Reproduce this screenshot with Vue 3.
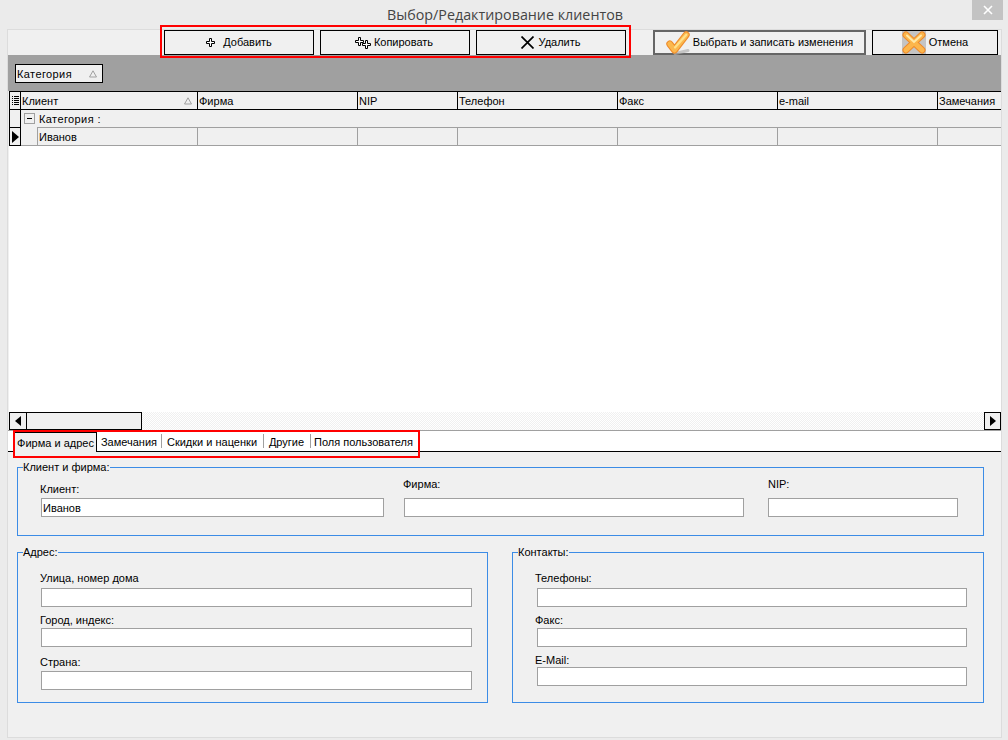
<script setup>
const columns = [
  { name: 'Клиент', width: 177, sorted: true },
  { name: 'Фирма', width: 160 },
  { name: 'NIP', width: 100 },
  { name: 'Телефон', width: 160 },
  { name: 'Факс', width: 160 },
  { name: 'e-mail', width: 160 },
  { name: 'Замечания', width: 63 },
]

const tabs = [
  { name: 'Фирма и адрес', width: 83 },
  { name: 'Замечания', width: 64 },
  { name: 'Скидки и наценки', width: 102 },
  { name: 'Другие', width: 47 },
  { name: 'Поля пользователя', width: 107 },
]

const address = ['Улица, номер дома', 'Город, индекс:', 'Страна:']
const contacts = ['Телефоны:', 'Факс:', 'E-Mail:']
</script>

<template>
  <div class="window">
    <div class="titlebar">
      <span class="title">Выбор/Редактирование клиентов</span>
      <div class="close">
        <svg width="10" height="10" viewBox="0 0 10 10"><path d="M1 1l8 8M9 1l-8 8" stroke="#fff" stroke-width="1.6" /></svg>
      </div>
    </div>

    <div class="panel">
      <div class="toolbar">
        <div class="edit-buttons">
          <button class="btn edit add">
            <svg width="9" height="9" viewBox="0 0 9 9"><path d="M3.500.5h2v3h3v2h-3v3h-2v-3h-3v-2h3z" fill="#fff" stroke="#000" /></svg>
            <span class="label">Добавить</span>
          </button>
          <button class="btn edit copy">
            <svg width="16" height="12" viewBox="0 0 16 12">
              <path d="M3.500.5h2v3h3v2h-3v3h-2v-3h-3v-2h3z" fill="#fff" stroke="#000" />
              <path d="M10.500 3.500h2v3h3v2h-3v3h-2v-3h-3v-2h3z" fill="#fff" stroke="#000" />
            </svg>
            <span class="label">Копировать</span>
          </button>
          <button class="btn edit remove">
            <svg width="13" height="13" viewBox="0 0 13 13"><path d="M.5.5l12 12M12.500.5l-12 12" stroke="#000" stroke-width="1.700" /></svg>
            <span class="label">Удалить</span>
          </button>
        </div>
        <button class="btn save">
          <svg class="check" width="24" height="24" viewBox="0 0 24 24">
            <path d="M9 22.500l13-3" stroke="#b0b0b0" stroke-width="3" stroke-linecap="round" fill="none" opacity="0.7" />
            <path d="M3.800 13l4.700 6L20.200 3.800" stroke="#ee8a2a" stroke-width="7" stroke-linecap="round" stroke-linejoin="round" fill="none" />
            <path d="M3.800 13l4.700 6L20.200 3.800" stroke="#fbb84e" stroke-width="5" stroke-linecap="round" stroke-linejoin="round" fill="none" />
            <path d="M9 16.500L20.300 3.700" stroke="#ffe18a" stroke-width="2.200" stroke-linecap="round" fill="none" />
          </svg>
          <span class="label">Выбрать и записать изменения</span>
        </button>
        <button class="btn cancel">
          <span class="cancel-icon">
            <svg width="24" height="23" viewBox="0 0 24 23">
              <path d="M4 4l16 15M20 4L4 19" stroke="#ee8a2a" stroke-width="7" stroke-linecap="round" fill="none" />
              <path d="M4 4l16 15M20 4L4 19" stroke="#fcb64c" stroke-width="5" stroke-linecap="round" fill="none" />
              <path d="M5 4.500l7 6.500 7-6.500" stroke="#ffe9a8" stroke-width="2" stroke-linecap="round" fill="none" />
            </svg>
          </span>
          <span class="label">Отмена</span>
        </button>
      </div>

      <div class="group-band">
        <div class="group-chip">
          <span class="spaced">Категория</span>
          <svg width="8" height="8" viewBox="0 0 8 8"><path d="M4 .8L7.500 7H.5z" fill="none" stroke="#a0a0a0" /></svg>
        </div>
      </div>

      <div class="grid">
        <div class="grid-head">
          <div class="indicator">
            <svg width="7" height="10" viewBox="0 0 7 10"><path d="M0 .5h1M2 .5h5M0 2.500h1M2 2.500h5M0 4.500h1M2 4.500h5M0 6.500h1M2 6.500h5M0 8.500h1M2 8.500h5" stroke="#000" /></svg>
          </div>
          <div v-for="col in columns" :key="col.name" class="head-cell" :style="{ width: col.width + 'px' }">
            <span>{{ col.name }}</span>
            <svg v-if="col.sorted" width="8" height="8" viewBox="0 0 8 8"><path d="M4 .8L7.500 7H.5z" fill="none" stroke="#a0a0a0" /></svg>
          </div>
        </div>
        <div class="group-row">
          <div class="row-side"></div>
          <div class="expander"><span class="minus"></span></div>
          <span class="group-name spaced">Категория :</span>
        </div>
        <div class="data-row">
          <div class="row-side current">
            <svg width="7" height="12" viewBox="0 0 7 12"><path d="M0 0l7 6-7 6z" fill="#000" /></svg>
          </div>
          <div class="indent"></div>
          <div
            v-for="(col, i) in columns"
            :key="col.name"
            class="data-cell"
            :style="{ width: (i === 0 ? col.width - 17 : col.width) + 'px' }"
          >{{ i === 0 ? 'Иванов' : '' }}</div>
        </div>
        <div class="grid-body"></div>
        <div class="scrollbar">
          <div class="arrow">
            <svg width="6" height="10" viewBox="0 0 6 10"><path d="M6 0L0 5l6 5z" fill="#000" /></svg>
          </div>
          <div class="thumb"></div>
          <div class="track"></div>
          <div class="arrow right">
            <svg width="6" height="10" viewBox="0 0 6 10"><path d="M0 0l6 5-6 5z" fill="#000" /></svg>
          </div>
        </div>
      </div>

      <div class="tabs">
        <div
          v-for="(tab, i) in tabs"
          :key="tab.name"
          class="tab"
          :class="{ active: i === 0 }"
          :style="{ width: tab.width + 'px' }"
        >{{ tab.name }}</div>
      </div>

      <div class="form">
        <fieldset class="box client-box">
          <legend>Клиент и фирма:</legend>
          <div class="client-fields">
            <div class="client-field first">
              <label>Клиент:</label>
              <div class="input">Иванов</div>
            </div>
            <div class="client-field second">
              <label>Фирма:</label>
              <div class="input"></div>
            </div>
            <div class="client-field third">
              <label>NIP:</label>
              <div class="input"></div>
            </div>
          </div>
        </fieldset>

        <div class="bottom-boxes">
          <fieldset class="box address-box">
            <legend>Адрес:</legend>
            <div class="stack">
              <div v-for="name in address" :key="name" class="stack-field">
                <label>{{ name }}</label>
                <div class="input"></div>
              </div>
            </div>
          </fieldset>
          <fieldset class="box contact-box">
            <legend>Контакты:</legend>
            <div class="stack">
              <div v-for="name in contacts" :key="name" class="stack-field">
                <label>{{ name }}</label>
                <div class="input"></div>
              </div>
            </div>
          </fieldset>
        </div>
      </div>

      <div class="mark mark-tools"></div>
      <div class="mark mark-tabs"></div>
    </div>
  </div>
</template>

<style>
html, body {
  margin: 0;
  background: #ebebeb;
}
</style>

<style scoped>
* {
  box-sizing: border-box;
}

.window {
  width: 1008px;
  height: 740px;
  background: #ebebeb;
  font-family: "Liberation Sans", sans-serif;
  font-size: 11px;
  color: #000;
  overflow: hidden;
}

.titlebar {
  height: 29px;
  display: flex;
  justify-content: center;
  position: relative;
}

.title {
  font-family: "Open Sans", sans-serif;
  font-size: 14.3px;
  line-height: 29px;
  color: #444;
  margin-left: 2px;
}

.close {
  position: absolute;
  top: 0;
  right: 5px;
  width: 31px;
  height: 20px;
  background: #c3c3c3;
  display: flex;
  align-items: center;
  justify-content: center;
}

.panel {
  position: relative;
  width: 995px;
  height: 709px;
  margin-left: 7px;
  background: #f0f0f0;
  border: 1px solid #dcdcdc;
}

.toolbar {
  height: 25px;
  display: flex;
}

.btn {
  height: 25px;
  padding: 0;
  background: #f0f0f0;
  border: 1px solid #000;
  font: inherit;
  display: flex;
  align-items: center;
  justify-content: center;
}

.label {
  margin-bottom: 2px;
}

.spaced {
  letter-spacing: 0.4px;
}

.edit-buttons {
  display: flex;
  gap: 6px;
  margin-left: 156px;
}

.edit {
  width: 150px;
}

.add {
  gap: 8px;
}

.copy {
  gap: 3px;
  padding-right: 2px;
}

.remove {
  gap: 5px;
  padding-right: 1px;
}

.save {
  width: 213px;
  margin-left: 27px;
  border: 2px solid #666;
  gap: 3px;
}

.check {
  flex: none;
  margin-top: 1px;
}

.cancel {
  width: 126px;
  margin-left: 6px;
  gap: 3px;
}

.cancel-icon {
  display: flex;
  background: #c4c4c4;
  height: 23px;
}

.group-band {
  height: 36px;
  background: #a0a0a0;
  padding: 9px 0 0 7px;
}

.group-chip {
  width: 88px;
  height: 19px;
  background: #f0f0f0;
  border: 1px solid #000;
  display: flex;
  align-items: center;
  padding: 0 5px 0 1px;
  justify-content: space-between;
}

.grid {
  display: flex;
  flex-direction: column;
  height: 339px;
  background: #fff;
  margin-left: 1px;
}

.grid-head {
  height: 19px;
  display: flex;
  background: #f0f0f0;
  border-top: 1px solid #000;
  border-bottom: 1px solid #000;
  border-left: 1px solid #000;
  flex: none;
}

.indicator {
  width: 11px;
  flex: none;
  border-right: 1px solid #000;
  display: flex;
  align-items: center;
  justify-content: center;
}

.head-cell {
  flex: none;
  border-right: 1px solid #000;
  padding: 0 5px 0 1px;
  display: flex;
  align-items: center;
  justify-content: space-between;
  white-space: nowrap;
  overflow: hidden;
}

.head-cell:last-child {
  border-right: none;
}

.group-row {
  height: 17px;
  flex: none;
  display: flex;
  align-items: center;
  background: #f0f0f0;
}

.group-name {
  padding-top: 1px;
}

.row-side {
  width: 12px;
  height: 100%;
  border-left: 1px solid #000;
  border-right: 1px solid #000;
  flex: none;
  display: flex;
  align-items: center;
  justify-content: center;
}

.current {
  height: 19px;
  border-top: 1px solid #000;
  border-bottom: 1px solid #000;
}

.expander {
  width: 18px;
  height: 100%;
  display: flex;
  align-items: center;
  padding-left: 3px;
}

.minus {
  width: 11px;
  height: 11px;
  border: 1px solid #a0a0a0;
  position: relative;
  display: block;
}

.minus::after {
  content: "";
  position: absolute;
  left: 2px;
  top: 4px;
  width: 5px;
  height: 1px;
  background: #000;
}

.data-row {
  height: 19px;
  flex: none;
  display: flex;
  background: #f0f0f0;
  position: relative;
}

.indent {
  width: 17px;
  flex: none;
  border-right: 1px solid #a0a0a0;
  border-bottom: 1px solid #a0a0a0;
}

.data-cell {
  flex: none;
  border-top: 1px solid #a0a0a0;
  border-bottom: 1px solid #a0a0a0;
  border-right: 1px solid #a0a0a0;
  padding: 0 1px;
  line-height: 18px;
}

.data-cell:last-child {
  border-right: none;
}

.grid-body {
  flex: 1;
  background: #fff;
}

.scrollbar {
  height: 18px;
  flex: none;
  display: flex;
  border-left: 1px solid #000;
}

.arrow {
  width: 17px;
  background: #f0f0f0;
  border: 1px solid #000;
  border-left: none;
  display: flex;
  align-items: center;
  justify-content: center;
}

.arrow.right {
  border-left: 1px solid #000;
}

.thumb {
  width: 115px;
  background: #f0f0f0;
  border: 1px solid #000;
  border-left: none;
}

.track {
  flex: 1;
  background-color: #fff;
  background-image: conic-gradient(#f0f0f0 25%, #fff 0 50%, #f0f0f0 0 75%, #fff 0);
  background-size: 2px 2px;
}

.tabs {
  height: 22px;
  background: #fff;
  display: flex;
  align-items: flex-end;
  border-top: 1px solid #a0a0a0;
  border-bottom: 1px solid #000;
  padding-left: 6px;
}

.tab {
  height: 20px;
  line-height: 22px;
  text-align: center;
  white-space: nowrap;
  position: relative;
}

.tab + .tab::before {
  content: "";
  position: absolute;
  left: 0;
  top: 3px;
  bottom: 3px;
  border-left: 1px solid #a0a0a0;
}

.tab.active + .tab::before {
  display: none;
}

.tab.active {
  background: #f0f0f0;
  border: 1px solid #000;
  border-bottom: none;
  border-left: 1px solid #a0a0a0;
  margin-bottom: -1px;
  height: 20px;
  line-height: 20px;
}

.form {
  padding: 9px 0 0 9px;
}

.box {
  margin: 0;
  padding: 0;
  border: 1px solid #3c8ce6;
  min-width: 0;
}

.box legend {
  padding: 0;
  margin-left: 5px;
  line-height: 13px;
}

.client-box {
  width: 967px;
  height: 75px;
}

.client-fields {
  display: flex;
}

.client-field label,
.stack-field label {
  display: block;
  line-height: 14px;
}

.input {
  height: 19px;
  background: #fff;
  border: 1px solid #a0a0a0;
  padding-left: 1px;
  line-height: 18px;
}

.first {
  width: 343px;
  margin-left: 23px;
  padding-top: 8px;
}

.first label {
  margin-left: -1px;
  margin-bottom: 2px;
}

.second {
  width: 340px;
  margin-left: 20px;
  padding-top: 3px;
}

.second label,
.third label {
  margin-bottom: 7px;
}

.second label {
  margin-left: -1px;
}

.third {
  width: 190px;
  margin-left: 24px;
  padding-top: 3px;
}

.bottom-boxes {
  display: flex;
  gap: 24px;
  margin-top: 10px;
}

.address-box {
  width: 471px;
  height: 157px;
}

.contact-box {
  width: 472px;
  height: 157px;
}

.address-box .stack {
  padding: 12px 15px 0 23px;
}

.contact-box .stack {
  padding: 12px 16px 0 24px;
}

.stack-field label {
  margin-left: -1px;
  margin-bottom: 3px;
}

.contact-box .stack-field label {
  margin-left: -2px;
}

.stack-field:nth-child(2) {
  margin-top: 6px;
}

.stack-field:nth-child(2) label {
  margin-bottom: 1px;
}

.address-box .stack-field:nth-child(3) {
  margin-top: 8px;
}

.address-box .stack-field:nth-child(3) label {
  margin-bottom: 2px;
}

.contact-box .stack-field:nth-child(3) {
  margin-top: 6px;
}

.contact-box .stack-field:nth-child(3) label {
  margin-bottom: 0;
}

.mark {
  position: absolute;
  border: 2px solid #f00;
  pointer-events: none;
}

.mark-tools {
  left: 152px;
  top: -5px;
  width: 471px;
  height: 33px;
}

.mark-tabs {
  left: 5px;
  top: 400px;
  width: 407px;
  height: 28px;
}
</style>
